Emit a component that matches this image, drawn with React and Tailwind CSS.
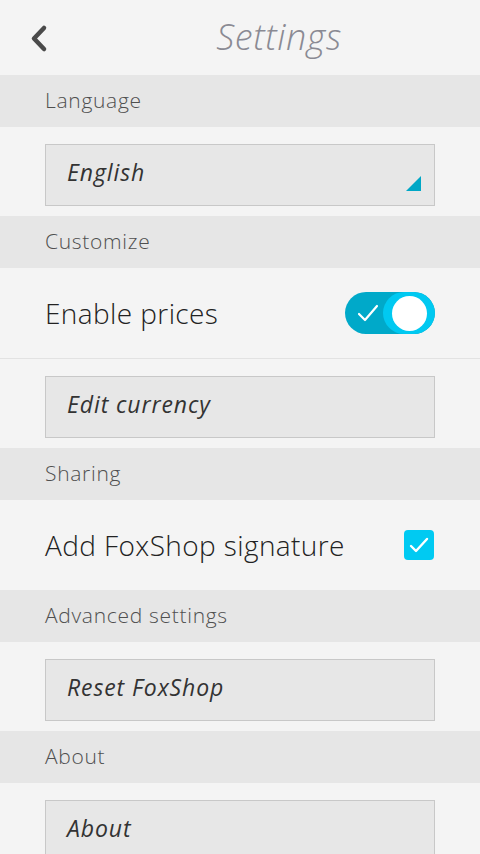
import React from "react";

const label = { fontFamily: '"Open Sans", "Noto Sans", sans-serif' };

function SectionHeader({ children }) {
  return (
    <div className="h-[52px] bg-[#e6e6e6] flex items-center px-[45px]">
      <span className="text-[21px] font-light tracking-[0.7px] text-[#4f4f4f]" style={label}>{children}</span>
    </div>
  );
}

function Button({ children, select }) {
  return (
    <div className="pt-[17px] pb-[10px] px-[45px]">
      <div className="relative h-[62px] bg-[#e7e7e7] border border-[#c8c8c8] flex items-center px-[21px]">
        <span className="text-[23px] italic font-medium tracking-[0.9px] text-[#333333] -mt-[5px]" style={label}>{children}</span>
        {select && (
          <svg className="absolute right-[13px] bottom-[14px]" width="15" height="15" viewBox="0 0 15 15">
            <polygon points="15,0 15,15 0,15" fill="#00a7c6" />
          </svg>
        )}
      </div>
    </div>
  );
}

export default function App() {
  return (
    <div className="w-[480px] h-[854px] overflow-hidden bg-[#f4f4f4]">
      <div className="h-[75px] flex items-center relative">
        <svg className="absolute left-[28px] top-[24px]" width="22" height="30" viewBox="0 0 22 30">
          <polyline points="16,4 6,14.5 16,25" fill="none" stroke="#4a4a4a" strokeWidth="4.5" strokeLinecap="round" strokeLinejoin="round" />
        </svg>
        <div className="flex-1 flex justify-center pl-[78px]">
          <span className="text-[36px] italic font-light tracking-[0.6px] text-[#8a8a93] -mt-[2px]" style={label}>Settings</span>
        </div>
      </div>

      <SectionHeader>Language</SectionHeader>
      <Button select>English</Button>

      <SectionHeader>Customize</SectionHeader>
      <div className="h-[91px] flex items-center justify-between px-[45px] border-b border-[#e2e2e2]">
        <span className="text-[28px] font-light tracking-[0.4px] text-[#222222]" style={label}>Enable prices</span>
        <div className="relative w-[90px] h-[42px] rounded-full bg-[#00a9c9] overflow-hidden">
          <svg className="absolute left-[12px] top-[12px]" width="22" height="18" viewBox="0 0 22 18">
            <polyline points="2,10 8,16 20,2" fill="none" stroke="white" strokeWidth="2.2" strokeLinecap="round" strokeLinejoin="round" />
          </svg>
          <div className="absolute right-0 top-0 w-[52px] h-[42px] rounded-full bg-[#00c9f1] flex items-center justify-center">
            <div className="w-[35px] h-[35px] rounded-full bg-white ml-[1px]" />
          </div>
        </div>
      </div>
      <Button>Edit currency</Button>

      <SectionHeader>Sharing</SectionHeader>
      <div className="h-[90px] flex items-center justify-between px-[45px]">
        <span className="text-[28px] font-light tracking-[0.4px] text-[#222222]" style={label}>Add FoxShop signature</span>
        <div className="w-[30px] h-[30px] rounded-[4px] bg-[#00caf2] flex items-center justify-center mr-[1px]">
          <svg width="20" height="16" viewBox="0 0 20 16">
            <polyline points="2,9 7,14 18,2" fill="none" stroke="white" strokeWidth="2.4" strokeLinecap="round" strokeLinejoin="round" />
          </svg>
        </div>
      </div>

      <SectionHeader>Advanced settings</SectionHeader>
      <Button>Reset FoxShop</Button>

      <SectionHeader>About</SectionHeader>
      <Button>About</Button>
    </div>
  );
}
